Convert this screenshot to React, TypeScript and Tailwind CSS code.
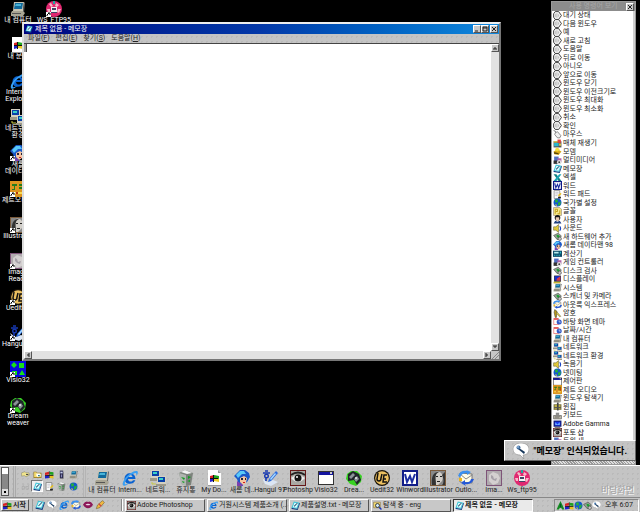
import React, { useState } from "react";

// Iconos dibujados sobre una cuadrícula de 16x16
const art: Record<string, React.ReactNode> = {
  computer: (
    <>
      <path d="M4 1h10l-1 9H3z" fill="#c9c5b4" />
      <path d="M5 2h8l-1 6H4z" fill="#116a9c" />
      <path d="M6 3h5v2H5z" fill="#47b4d8" />
      <path d="M2 10h11l2 2-2 3H1v-3z" fill="#a9a594" />
      <path d="M2 12h9v1H2z" fill="#555" />
      <path d="M14 1l1 1-1 9h-1z" fill="#666" />
    </>
  ),
  ie: (
    <>
      <path d="M13.5 9H6c.3 3 4 3.400 5 1.300h2.400C11.500 15 3 15.500 2.500 9 2.300 1.500 13.500 1 13.500 9zM6 7h4.500C10 4.400 6.500 4.400 6 7z" fill="#0a62d0" fillRule="evenodd" />
      <path d="M1 15C-1 11 9 0 15 1c2 1 0 4-1 5 1-3 0-4-3-2-5 2-9 8-8 10 1 1 3-1 4-1-2 2-5 4-6 2z" fill="#3aa0f4" />
    </>
  ),
  network: (
    <>
      <path d="M1 0h9v8H1zM7 6h9v8H7z" fill="#d4d0c0" />
      <path d="M2 1h7v5H2zM8 7h7v5H8z" fill="#0a3fa8" />
      <path d="M3 2h4v2H3zM9 8h4v2H9z" fill="#3ad0c8" />
      <path d="M0 8h7v3H0zM6 14h10v2H6z" fill="#9c9888" />
      <path d="M2 12v2h4" stroke="#cc4" fill="none" />
    </>
  ),
  doc: (
    <>
      <path d="M2 0h10l3 3v13H2z" fill="#fff" />
      <path d="M12 0v3h3zM2 15h13v1H2z" fill="#999" />
      <path d="M4 6l4-1v3l-4 1z" fill="#d22" />
      <path d="M8 5l5 1v3l-5-1z" fill="#2a2" />
      <path d="M4 9l4-1v3l-4 1z" fill="#22c" />
      <path d="M8 8l5 1v3l-5-1z" fill="#ec2" />
      <path d="M7 5h1v7H7zM4 8h8v1H4z" fill="#111" />
    </>
  ),
  hair: (
    <>
      <path d="M3 9L0 6l3-3 3-3 5 0 4 3 1 4-3 5-5 3-4-3z" fill="#1a58c8" />
      <path d="M2 5l4-4 4 0 2 3-4 0-4 4z" fill="#58c8f8" />
      <path d="M6 8l4-2 3 2-1 5-3 2-3-3z" fill="#f6c4a0" />
      <path d="M7 8h2v2H7zM11 8h1v2h-1z" fill="#223" />
      <path d="M9 12h2v1H9z" fill="#c22" />
      <path d="M3 11l6 4v1H3z" fill="#7b3fb0" />
    </>
  ),
  jet: (
    <>
      <path d="M0 0h16v16H0z" fill="#dc9520" />
      <path d="M2 3h5v2H5v4H2V8h2V5H2zM9 3h5v2H9zM9 6h4v2H9z" fill="#237c1e" />
      <path d="M2 11h12v2H2z" fill="#f8dc50" />
      <path d="M12 5h2v5h-2zM6 11h2v2H6z" fill="#b83410" />
    </>
  ),
  face: (
    <>
      <path d="M0 0h16v16H0z" fill="#7b5b3c" />
      <path d="M1 1h14v14H1z" fill="#888" />
      <path d="M6 2c6-1 8 4 6 9l-4 4H5l1-3-2-4z" fill="#d2cec8" />
      <path d="M2 15C1 8 3 1 9 2 4 4 6 9 6 15zM12 5c2 4 2 8 0 10h3V2z" fill="#343434" />
      <path d="M6 6h2v1H6zM10 6h2v1h-2zM7 11h3v1H7z" fill="#222" />
    </>
  ),
  image: (
    <>
      <path d="M0 0h16v16H0z" fill="#7e5478" />
      <path d="M1 1h14v14H1z" fill="#b0aaae" />
      <path d="M3 5l4-3 5 2 2 4-2 5-5 2-4-4z" fill="#d4d0d0" />
      <path d="M5 5l2 1 1 3 3-1-1 3-3-1-2-2z" fill="#a6a0a8" />
    </>
  ),
  uedit: (
    <>
      <circle cx="8" cy="8" r="8" fill="#181208" />
      <circle cx="8" cy="8" r="6.800" fill="#ecc060" />
      <path d="M4 3L3 9q0 2 2 2t2-3l1-4M13 5h-3l-1 7h4M9 9h3" stroke="#111" strokeWidth="1.500" fill="none" />
    </>
  ),
  hangul: (
    <>
      <path d="M0 8l5 4 6-2 5 2-7 4-6-2z" fill="#dce6f4" />
      <path d="M3 1h3M1 3h7M4 8v3" stroke="#1738b0" strokeWidth="1.600" fill="none" />
      <circle cx="4.500" cy="6" r="1.800" stroke="#1738b0" strokeWidth="1.400" fill="none" />
      <path d="M14 1l2 2-7 8-3 1 1-3z" fill="#2c6ce0" />
      <path d="M13 3l1 1-5 6-1-1z" fill="#a9dcff" />
    </>
  ),
  visio: (
    <>
      <path d="M0 0h16v16H0z" fill="#0808e0" />
      <path d="M4 1l3 3-3 3-3-3zM9 2h5v5H9zM12 9l3 5H9zM2 10h5v4H2z" fill="#18e018" />
    </>
  ),
  dream: (
    <>
      <path d="M5 1l6 0 5 5-1 6-5 4-6-2-4-5 1-5z" fill="#37d222" />
      <path d="M2 4l5-3 6 3 2 6-4 5-3-5-6 1z" fill="#20262a" />
      <path d="M3 7l4-4 2 2-4 4zM8 9l3-3 2 3-3 3z" fill="#8b9398" />
      <circle cx="10" cy="8" r="1" fill="#eee" />
    </>
  ),
  ftp: (
    <>
      <circle cx="8" cy="8" r="8" fill="#e02870" />
      <path d="M3 3l2-1 2 3-2 1zM10 2l3 2-2 2-2-1zM1 8h3v3H2zM12 8h3l-2 4-2-1z" fill="#f8b8c8" />
      <path d="M5 6h6v6H5z" fill="#f4f4f4" />
      <path d="M6 7h4v2H6zM5 11h6v1H5z" fill="#446" />
      <path d="M7 0h2v3H7z" fill="#20a8a0" />
    </>
  ),
  bin: (
    <>
      <path d="M1 3l6-3 8 3-2 12-4 1-5-2z" fill="#7c827c" />
      <path d="M1 3l7 2v11l-5-2z" fill="#b0b6b0" />
      <path d="M3 2l4-2 7 3-5 1z" fill="#f4f4f4" />
      <path d="M3 7l4 1-1 2zM4 11l3 1-2 1zM10 6l3 1-3 2zM9 11l3-1v2z" fill="#10a020" />
    </>
  ),
  eye: (
    <>
      <path d="M0 0h16v16H0z" fill="#661818" />
      <path d="M1 1h14v14H1z" fill="#a9a9a4" />
      <path d="M1 8q7-6 14 0-7 8-14 0z" fill="#ececec" />
      <circle cx="8" cy="8" r="3.500" fill="#141414" />
      <circle cx="7" cy="7" r="1" fill="#fff" />
      <path d="M1 5q7-5 14 0" stroke="#222" strokeWidth="2" fill="none" />
    </>
  ),
  app: (
    <>
      <path d="M0 1h16v14H0z" fill="#333" />
      <path d="M1 5h14v9H1z" fill="#fff" />
      <path d="M1 2h14v3H1z" fill="#1414a0" />
      <path d="M12 2h2v2h-2z" fill="#ccc" />
    </>
  ),
  word: (
    <>
      <path d="M0 0h16v16H0z" fill="#101c88" />
      <path d="M2 2h12v12H2z" fill="#fff" />
      <path d="M3 4l2 8 3-6 2 6 3-8" stroke="#1a2ca0" strokeWidth="2" fill="none" />
    </>
  ),
  outlook: (
    <>
      <path d="M2 3l12 1v9L2 12z" fill="#fffde8" stroke="#777" />
      <path d="M2 4l6 5 6-4" stroke="#888" fill="none" />
      <path d="M0 6q2-6 9-5l-1-1 5 2-4 3V3Q4 3 2 7z" fill="#3a90f0" />
      <path d="M16 9q-2 6-9 5l1 2-5-3 4-3v2q5 1 6-3z" fill="#2458d8" />
      <path d="M1 8h3v3H1z" fill="#f0b818" />
    </>
  ),
  note: (
    <>
      <path d="M5 1l10 2-4 11-10-2z" fill="#38c4d8" />
      <path d="M6 3l7 1-3 8-7-1z" fill="#d8fcff" />
      <path d="M1 12l10 2 4-11 1 1-4 12-11-2z" fill="#123c80" />
      <path d="M5 9l6-6 1 1-6 6z" fill="#246" />
    </>
  ),
  folder: (
    <>
      <path d="M1 3h5l1 2h8v9H1z" fill="#8a6c18" />
      <path d="M2 4h4l1 2h7v7H2z" fill="#f4dc70" />
      <path d="M6 6h6l2 3-5 4-3-3z" fill="#fff" />
      <path d="M9 9h3v2H9z" fill="#278" />
    </>
  ),
  bubble: (
    <>
      <path d="M4 1h6l5 7-5 7H4L1 11V5z" fill="#f4f4f4" stroke="#333" strokeWidth="1.600" />
      <path d="M4 5v6M7 4v8M10 6v4" stroke="#999" strokeWidth="1.200" fill="none" />
    </>
  ),
  mic: (
    <>
      <path d="M8 0c5 0 8 3 8 6s-2 6-6 6l1 4-4-4C2 12 0 9 0 6s3-6 8-6z" fill="#fff" stroke="#888" strokeWidth=".6" />
      <path d="M6 5l6 4-1 2-6-5z" fill="#17375a" />
      <circle cx="5.500" cy="4.500" r="2" fill="#406ea0" />
      <circle cx="5" cy="4" r=".8" fill="#bfe0ff" />
    </>
  ),
  mouse: (
    <>
      <path d="M1 1q4 0 4 4" stroke="#222" fill="none" />
      <path d="M4 5l4-2 6 7-2 4-4 0-5-6z" fill="#f0f0f0" stroke="#444" />
    </>
  ),
  media: (
    <>
      <path d="M1 4h14v11H1z" fill="#555" />
      <path d="M2 7h8v6H2z" fill="#28b8d0" />
      <path d="M8 1h6v6H8z" fill="#e04040" />
      <path d="M11 8h3v4h-3zM1 4h7v2H1z" fill="#f0d040" />
    </>
  ),
  modem: (
    <>
      <path d="M1 8l7-4 7 4-5 6-8-1z" fill="#d8a818" />
      <path d="M4 3l4-2 4 3-3 4-5-1z" fill="#f4dc40" />
      <path d="M2 9l8 2v2l-8-1z" fill="#554408" />
    </>
  ),
  film: (
    <>
      <path d="M2 1h8v8H2z" fill="#5070c0" />
      <path d="M1 8h9v6H1z" fill="#333" />
      <path d="M8 4h7v7H8z" fill="#b060a8" />
      <circle cx="11" cy="11" r="4" fill="#ddd" />
      <circle cx="11" cy="11" r="1.500" fill="#333" />
    </>
  ),
  excel: (
    <>
      <path d="M1 2h5l9 12h-5z" fill="#128080" />
      <path d="M15 2h-4L1 14h5z" fill="#18a8b8" />
      <path d="M1 14h13v1H1z" fill="#145" />
    </>
  ),
  pad: (
    <>
      <path d="M2 1h10v14H2z" fill="#fff" stroke="#555" />
      <path d="M4 4h6M4 7h6M4 10h4" stroke="#99a" fill="none" />
      <path d="M9 9l5-4 1 2-5 5z" fill="#e8c020" />
      <path d="M9 12l5 0 0 3-5 0z" fill="#222" />
    </>
  ),
  globe: (
    <>
      <circle cx="8" cy="8" r="7" fill="#1458d0" />
      <path d="M3 3l5-1 1 4-4 3zM9 8l5-2-1 6-4 2z" fill="#28b038" />
      <path d="M4 11l3 1 0 2-3-1z" fill="#e8d040" />
    </>
  ),
  font: (
    <>
      <path d="M1 1h11l3 3v11H1z" fill="#f6e88c" stroke="#876" />
      <path d="M4 12V4h4v4H5M8 12h4V6" stroke="#b89410" strokeWidth="1.500" fill="none" />
    </>
  ),
  user: (
    <>
      <circle cx="8" cy="5" r="5" fill="#151515" />
      <path d="M5 4h6v5l-3 2-3-2z" fill="#e8c8b0" />
      <path d="M1 15l3-5 4 2 4-2 3 5z" fill="#204080" />
    </>
  ),
  sound: (
    <>
      <path d="M1 5h4l5-4v14l-5-4H1z" fill="#e0c838" stroke="#664" />
      <path d="M12 4q3 4 0 8" stroke="#1844c0" strokeWidth="2" fill="none" />
    </>
  ),
  chip: (
    <>
      <path d="M1 6l8-4 6 5-7 7z" fill="#90a090" stroke="#444" />
      <path d="M6 6l3-1 3 3-3 3z" fill="#18a030" />
      <circle cx="12" cy="12" r="3" fill="#c8c8c8" stroke="#333" />
    </>
  ),
  calc: (
    <>
      <path d="M0 3h16v11H0z" fill="#104c68" />
      <path d="M2 5h8v3H2z" fill="#b8f0f0" />
      <path d="M2 10h2v2H2zM6 10h2v2H6zM10 10h2v2h-2zM12 5h2v3h-2z" fill="#30d0d8" />
    </>
  ),
  phone: (
    <>
      <path d="M5 1h6v14H5z" fill="#2c2c50" />
      <path d="M6 3h4v3H6z" fill="#c8d0f0" />
      <path d="M7 8h2v5H7z" fill="#8888b8" />
      <path d="M11 3h1v12H6v-1h5z" fill="#777" />
    </>
  ),
  display: (
    <>
      <path d="M2 1h12v11H2z" fill="#222" />
      <path d="M3 2h10v8H3z" fill="#1830d0" />
      <path d="M7 6l6-4v8H6z" fill="#d83848" />
      <path d="M1 12h12v3H1z" fill="#c8b830" />
    </>
  ),
  gamma: (
    <>
      <path d="M1 1h14v11H1z" fill="#111a70" />
      <path d="M3 3h10v7H3z" fill="#1838f0" />
      <path d="M4 4l4 4 4-4v5H4z" fill="#70b0ff" />
      <path d="M3 13h10v2H3z" fill="#444" />
    </>
  ),
  key: (
    <>
      <path d="M3 1l4 3-1 11H4L2 6z" fill="#b89818" stroke="#443" />
      <path d="M7 5l7 8-2 1-6-6z" fill="#d8c850" stroke="#443" strokeWidth=".6" />
    </>
  ),
  clock: (
    <>
      <path d="M1 2h9v12H1z" fill="#e04848" />
      <path d="M2 5h7v8H2z" fill="#fff" />
      <circle cx="11" cy="9" r="4.500" fill="#3058c8" />
      <path d="M11 6v3h3" stroke="#fff" fill="none" />
    </>
  ),
  zip: (
    <>
      <path d="M1 4h14v10H1z" fill="#777040" />
      <path d="M3 5h10v8H3z" fill="#c0b448" />
      <path d="M7 1h3v14H7z" fill="#444" />
      <path d="M2 9h12v2H2z" fill="#555" />
    </>
  ),
  keyboard: (
    <>
      <path d="M1 8h14v6H1z" fill="#c4c0b0" stroke="#444" />
      <path d="M3 10h10M3 12h8" stroke="#555" fill="none" />
      <path d="M5 3h6v4H5z" fill="#888" />
    </>
  ),
  flag: (
    <>
      <path d="M0 5l7-2v5l-7 1z" fill="#d82020" />
      <path d="M8 3l7 1v5l-7-1z" fill="#20a020" />
      <path d="M0 10l7-1v5l-7 1z" fill="#2020c8" />
      <path d="M8 9l7 1v5l-7-1z" fill="#e8c020" />
      <path d="M7 2h1v12H7zM0 9h15v1H0z" fill="#111" />
    </>
  ),
  tree: (
    <>
      <path d="M8 0l3 6 4 9h-4l-3-5-3 5H1l4-9z" fill="#118a20" />
      <path d="M7 5h2v7H7z" fill="#052" />
    </>
  ),
  lips: (
    <>
      <path d="M0 7q4-6 8-4 4-2 8 4-3 6-8 6T0 7z" fill="#8c1858" />
      <path d="M4 7q4-2 8 0-4 3-8 0z" fill="#f0d8e8" />
    </>
  ),
  pen: (
    <>
      <path d="M2 14l2-6 8-7 3 3-7 8z" fill="#f0b840" stroke="#763" />
      <path d="M6 6l4 4" stroke="#c44" strokeWidth="2" />
    </>
  ),
  search: (
    <>
      <path d="M1 2h12v10H1z" fill="#f4dc70" stroke="#764" />
      <circle cx="8" cy="8" r="3.500" fill="#cfeaff" stroke="#222" strokeWidth="1.500" />
      <path d="M11 11l4 4" stroke="#1634c0" strokeWidth="2.500" />
    </>
  ),
  glasses: (
    <path d="M2 8h4v5H2zM9 8h4v5H9zM6 9h3M3 8l2-4M13 8l1-4" stroke="#a4a4a4" fill="none" />
  ),
  ghost: (
    <>
      <path d="M1 5l6-2 2 2 5 0 1 4-6 3-3-2-5 1z" fill="#f0e48c" stroke="#887" />
      <path d="M9 7h4v2H9z" fill="#444" />
    </>
  ),
};

const Icon = ({ name, className }: { name: string; className: string }) => (
  <svg viewBox="0 0 16 16" className={`shrink-0 ${className}`} aria-hidden="true">
    {art[name]}
  </svg>
);

const desktopItems = [
  { icon: "computer", label: "내 컴퓨터" },
  { icon: "doc", label: "내 문서" },
  { icon: "ie", label: "Internet Explorer" },
  { icon: "network", label: "네트워크 환경" },
  { icon: "hair", label: "새롬 데이타맨", link: true },
  { icon: "jet", label: "제트오디오", link: true },
  { icon: "face", label: "Illustrator", link: true },
  { icon: "image", label: "Image Ready", link: true },
  { icon: "uedit", label: "Uedit32", link: true },
  { icon: "hangul", label: "Hangul 97", link: true },
  { icon: "visio", label: "Visio32", link: true },
  { icon: "dream", label: "Dream weaver", link: true },
  { icon: "ftp", label: "WS_FTP95", link: true },
];

const commands = [
  ["bubble", "대기 상태"],
  ["bubble", "다음 윈도우"],
  ["bubble", "예"],
  ["bubble", "새로 고침"],
  ["bubble", "도움말"],
  ["bubble", "뒤로 이동"],
  ["bubble", "아니오"],
  ["bubble", "앞으로 이동"],
  ["bubble", "윈도우 닫기"],
  ["bubble", "윈도우 이전크기로"],
  ["bubble", "윈도우 최대화"],
  ["bubble", "윈도우 최소화"],
  ["bubble", "취소"],
  ["bubble", "확인"],
  ["mouse", "마우스"],
  ["media", "매체 재생기"],
  ["modem", "모뎀"],
  ["film", "멀티미디어"],
  ["note", "메모장"],
  ["excel", "엑셀"],
  ["word", "워드"],
  ["pad", "워드 패드"],
  ["globe", "국가별 설정"],
  ["font", "글꼴"],
  ["user", "사용자"],
  ["sound", "사운드"],
  ["chip", "새 하드웨어 추가"],
  ["hair", "새롬 데이타맨 98"],
  ["calc", "계산기"],
  ["film", "게임 컨트롤러"],
  ["chip", "디스크 검사"],
  ["display", "디스플레이"],
  ["computer", "시스템"],
  ["chip", "스캐너 및 카메라"],
  ["outlook", "아웃룩 익스프레스"],
  ["key", "암호"],
  ["clock", "바탕 화면 테마"],
  ["clock", "날짜/시간"],
  ["computer", "내 컴퓨터"],
  ["network", "네트워크"],
  ["network", "네트워크 환경"],
  ["sound", "녹음기"],
  ["globe", "넷미팅"],
  ["app", "제어판"],
  ["jet", "제트 오디오"],
  ["computer", "윈도우 탐색기"],
  ["zip", "윈집"],
  ["keyboard", "키보드"],
  ["gamma", "Adobe Gamma"],
  ["eye", "포토 샵"],
  ["film", "트위 새"],
];

const smallTools = [
  ["ghost", "열기"],
  ["folder", "폴더"],
  ["flag", "시작 메뉴"],
  ["phone", "장치"],
  ["computer", "컴퓨터"],
  ["glasses", "보기"],
  ["note", "바탕화면"],
  ["pad", "문서"],
  ["bin", "휴지통"],
  ["globe", "인터넷"],
];

const shortcuts = [
  ["computer", "내 컴퓨터"],
  ["ie", "Intern..."],
  ["network", "네트워..."],
  ["bin", "휴지통"],
  ["doc", "My Do..."],
  ["hair", "새롬 데.."],
  ["hangul", "Hangul 97"],
  ["eye", "Photoshp"],
  ["app", "Visio32"],
  ["dream", "Drea..."],
  ["uedit", "Uedit32"],
  ["word", "Winword"],
  ["face", "Illustrator"],
  ["outlook", "Outlo..."],
  ["image", "Ima..."],
  ["ftp", "Ws_ftp95"],
];

const quickLaunch = [
  ["note", "바탕화면 보기"],
  ["mic", "음성"],
  ["ie", "Internet Explorer"],
  ["outlook", "Outlook Express"],
  ["lips", "채팅"],
  ["pen", "펜"],
];

const tasks = [
  ["eye", "Adobe Photoshop"],
  ["ie", "거원시스템 제품소개 (..."],
  ["note", "제품설명.txt - 메모장"],
  ["search", "탐색 중 - eng"],
  ["note", "제목 없음 - 메모장"],
];

const menus = [
  ["파일", "F"],
  ["편집", "E"],
  ["찾기", "S"],
  ["도움말", "H"],
];

const raised = "border border-t-white border-l-white border-r-[#555] border-b-[#555] bg-[#c8c8c8]";
const face =
  "bg-[#c4c4c4] bg-[radial-gradient(#bababa_1px,transparent_1px)] bg-[length:5px_5px]";

const ControlButton = ({ label, d }: { label: string; d: string }) => (
  <button aria-label={label} className={`flex h-2 w-2 items-center justify-center ${raised}`}>
    <svg viewBox="0 0 6 6" className="h-full w-full" aria-hidden="true">
      <path d={d} stroke="#222" strokeWidth="1" fill="none" />
    </svg>
  </button>
);

const Notepad = () => {
  const [text, setText] = useState("");

  return (
    <section
      className={`absolute top-[22px] right-[139px] bottom-[104px] left-[22px] flex flex-col border-2 border-t-[#eee] border-l-[#ddd] border-r-[#777] border-b-[#777] ${face}`}
    >
      <header className="flex h-[10px] items-center bg-gradient-to-r from-[#000080] via-[#0438a8] to-[#1288dc] px-px text-white">
        <Icon name="note" className="h-2 w-2" />
        <h1 className="flex-1 pl-[2px] text-[7px] leading-[10px]">제목 없음 - 메모장</h1>
        <ControlButton label="최소화" d="M1 5h3" />
        <ControlButton label="최대화" d="M1 1h4v4H1zM1 2h4" />
        <span className="w-px" />
        <ControlButton label="닫기" d="M1 1l4 4M5 1l-4 4" />
      </header>
      <nav className="flex h-[9px] items-center gap-[6px] pl-1 text-[7px] leading-[9px] text-[#222]">
        {menus.map(([label, key]) => (
          <button key={key}>
            {label}(<span className="underline">{key}</span>)
          </button>
        ))}
      </nav>
      <div className="relative flex min-h-0 flex-1 border-t border-[#444]">
        <textarea
          aria-label="본문"
          value={text}
          onChange={(e) => setText(e.target.value)}
          className="min-w-0 flex-1 resize-none bg-white p-1 text-[7px] outline-none"
        />
        <span className="absolute top-0 left-0 h-2 w-[3px] border-r border-[#444] bg-[#999]" />
        <div className="flex w-2 flex-col justify-between bg-[#e2e2e2]">
          <ControlButton label="위로" d="M1 4h4M2 3h2" />
          <ControlButton label="아래로" d="M1 2h4M2 3h2" />
        </div>
      </div>
      <div className="flex h-2 bg-[#e2e2e2]">
        <ControlButton label="왼쪽으로" d="M4 1v4M3 2v2" />
        <span className="flex-1" />
        <ControlButton label="오른쪽으로" d="M2 1v4M3 2v2" />
        <svg viewBox="0 0 8 8" className="h-2 w-2 bg-[#c6c6c6]" aria-hidden="true">
          <path d="M1 8l7-7M4 8l4-4" stroke="#888" />
        </svg>
      </div>
    </section>
  );
};

// Lista de comandos de voz
const CommandPanel = () => (
  <aside className="absolute top-px right-1 bottom-0 flex w-[85px] flex-col border border-[#999] bg-[#d0d0d0]">
    <header className="flex h-[9px] items-center justify-between bg-[#8c8c8c] px-px text-[7px] leading-[9px] text-[#a8a8a8]">
      <span className="pl-4">사용 명령어 보기</span>
      <ControlButton label="닫기" d="M1 1l4 4M5 1l-4 4" />
    </header>
    <ul className="mr-[2px] mb-[3px] flex min-h-0 flex-1 flex-col bg-white pb-4">
      {commands.map(([icon, label]) => (
        <li key={label} className="flex min-h-0 flex-1 items-center gap-px pl-px whitespace-nowrap">
          <Icon name={icon} className="h-[9px] w-[9px]" />
          <span className="text-[7px] leading-[8px] text-[#222]">{label}</span>
        </li>
      ))}
    </ul>
    <span className="absolute inset-x-0 bottom-0 h-[3px] bg-[repeating-linear-gradient(45deg,#999_0_1px,#ddd_1px_2px)]" />
  </aside>
);

const ShortcutBar = () => (
  <div className={`flex h-8 border-t border-white ${face}`}>
    <div className="my-px ml-px flex w-2 flex-col justify-between border border-[#555] bg-[#888]">
      <button aria-label="이전" className="h-[6px] bg-white" />
      <button aria-label="다음" className="flex h-[6px] items-center justify-center bg-[#ddd]">
        <span className="h-[2px] w-[2px] bg-black" />
      </button>
    </div>
    <span className="ml-1 w-[3px] border-r border-l border-[#aaa]" />
    <div className="ml-[3px] grid grid-cols-5 content-start pt-[2px]">
      {smallTools.map(([icon, label]) => (
        <button
          key={label}
          aria-label={label}
          className={`flex h-3 w-3 items-center justify-center ${
            icon === "note" ? "border border-t-[#777] border-l-[#777] border-r-white border-b-white bg-[#eee]" : ""
          }`}
        >
          <Icon name={icon} className="h-[9px] w-[9px]" />
        </button>
      ))}
    </div>
    <span className="ml-1 w-[3px] border-r border-l border-[#b4b4b4]" />
    <div className="ml-[2px] flex">
      {shortcuts.map(([icon, label]) => (
        <button key={label} className="flex w-7 flex-col items-center pt-1 whitespace-nowrap">
          <Icon name={icon} className="h-4 w-4" />
          <span className="text-[7px] leading-[9px] text-[#222]">{label}</span>
        </button>
      ))}
    </div>
    <span className="ml-auto self-end pr-[6px] text-[9px] leading-[14px] text-[#a0a0a0] [text-shadow:1px_1px_#fff]">
      바탕화면
    </span>
  </div>
);

const Taskbar = () => {
  const [active, setActive] = useState(4);

  return (
    <footer className={`flex h-[15px] items-center border-t border-[#888] text-[7px] text-[#222] ${face}`}>
      <button className={`ml-px flex h-3 w-7 items-center gap-px px-px font-bold ${raised}`}>
        <Icon name="flag" className="h-[9px] w-[9px]" />
        <span className="whitespace-nowrap">시작</span>
      </button>
      <span className="ml-[3px] h-3 w-px bg-[#999]" />
      <div className="flex w-[88px] items-center gap-[2px] pl-[2px]">
        {quickLaunch.map(([icon, label]) => (
          <button key={label} aria-label={label} className="flex w-[10px] justify-center">
            <Icon name={icon} className="h-[10px] w-[10px]" />
          </button>
        ))}
      </div>
      <span className="mr-[2px] h-3 w-[2px] border-l border-[#888] bg-white" />
      <div className="flex flex-1 gap-[2px]">
        {tasks.map(([icon, label], i) => (
          <button
            key={label}
            onClick={() => setActive(i)}
            className={`flex h-[13px] w-20 items-center gap-px overflow-hidden px-px leading-[10px] whitespace-nowrap ${
              active === i
                ? "border border-t-[#333] border-l-[#333] border-r-white border-b-white bg-[#eaeaea] font-bold"
                : raised
            }`}
          >
            <Icon name={icon} className="h-[9px] w-[9px]" />
            {label}
          </button>
        ))}
      </div>
      <div className="mr-px flex h-[13px] items-center border border-t-[#888] border-l-[#888] border-r-white border-b-white pr-[5px] pl-px">
        <Icon name="tree" className="h-[9px] w-[9px]" />
        <Icon name="flag" className="h-[9px] w-[9px]" />
        <Icon name="globe" className="h-[9px] w-[9px]" />
        <Icon name="chip" className="h-[9px] w-[9px]" />
        <Icon name="mic" className="h-[9px] w-[9px]" />
        <time className="pl-1 whitespace-nowrap">오후 6:07</time>
      </div>
    </footer>
  );
};

const App = () => (
  <div className="flex h-screen flex-col overflow-hidden bg-black font-['Roboto','Noto_Sans_CJK_KR',sans-serif] text-black">
    <main className="relative min-h-0 flex-1">
      <div className="grid h-full auto-cols-[36px] grid-flow-col grid-rows-[repeat(12,36px)] pt-px">
        {desktopItems.map(({ icon, label, link }) => (
          <button key={label} className="flex flex-col items-center text-white">
            <span className="relative flex">
              <Icon name={icon} className="h-4 w-4" />
              {link && (
                <svg viewBox="0 0 5 5" className="absolute bottom-0 left-0 h-[5px] w-[5px] bg-white" aria-hidden="true">
                  <path d="M1 4V3l2-2M2 1h2v2" stroke="#000" fill="none" />
                </svg>
              )}
            </span>
            <span className="text-[7px] leading-[7px] break-keep">{label}</span>
          </button>
        ))}
      </div>
      <Notepad />
      <CommandPanel />
      <div
        role="status"
        className={`absolute right-1 bottom-1 flex h-[21px] items-center gap-[5px] border border-t-white border-l-white border-r-[#666] border-b-[#666] px-2 ${face}`}
      >
        <Icon name="mic" className="h-4 w-4" />
        <span className="text-[9px] leading-3 font-bold whitespace-nowrap">"메모장" 인식되었습니다.</span>
      </div>
    </main>
    <ShortcutBar />
    <Taskbar />
  </div>
);

export default App;
